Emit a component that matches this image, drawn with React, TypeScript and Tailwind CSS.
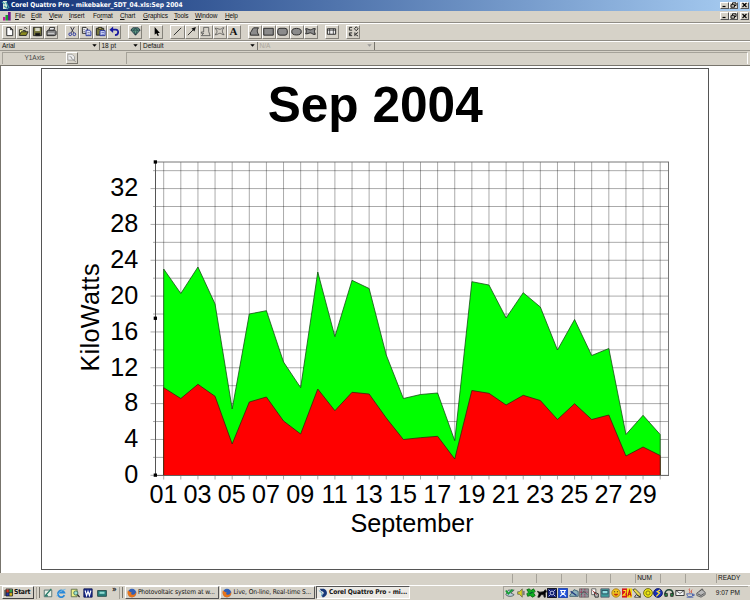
import type { ReactNode } from 'react';
import clsx from 'clsx';

// Height of each day's point on the chart canvas
const total = [
  269, 293.5, 267, 304, 409, 314, 310.7, 362, 387.7, 272, 336.7, 280.3, 288.5, 355, 398.5,
  394.5, 393, 440.7, 281.7, 285, 318, 292.7, 307, 350, 319.5, 355.5, 348.5, 434.5, 415.3, 434.5,
];
const base = [
  387.7, 398.5, 384.3, 396.3, 444, 402, 397, 421, 434, 389, 410.7, 392.3, 394, 418, 439.5,
  437.7, 436.3, 459, 390.5, 393.3, 405, 395.3, 400.5, 419.5, 403.7, 419.5, 415, 456, 447, 455.5,
];

const dayX = (i: number) => 163.7 + i * 17.12;
const kwY = (v: number) => 475.3 - v * 8.96;
const area = (ys: number[]) =>
  `163.7,475.5 ${ys.map((y, i) => `${dayX(i)},${y}`).join(' ')} ${dayX(29)},475.5`;

const menu = [
  { label: 'File', w: 'w-[16px]' },
  { label: 'Edit', w: 'w-[18px]' },
  { label: 'View', w: 'w-[20px]' },
  { label: 'Insert', w: 'w-[24px]' },
  { label: 'Format', w: 'w-[27px]', key: 2 },
  { label: 'Chart', w: 'w-[23px]' },
  { label: 'Graphics', w: 'w-[31px]' },
  { label: 'Tools', w: 'w-[21px]' },
  { label: 'Window', w: 'w-[30px]' },
  { label: 'Help', w: 'w-[20px]' },
];

function Ico({ children, size = 12 }: { children: ReactNode; size?: number }) {
  return (
    <svg width={size} height={size} viewBox="0 0 12 12" fill="none" stroke="#222" strokeWidth="1" className="shrink-0">
      {children}
    </svg>
  );
}

const toolGroups: ReactNode[][] = [
  [
    <path d="M3 1.5h4l2.5 2.5v6.5H3zM7 1.5V4h2.5" fill="#fff" />,
    <>
      <path d="M1.5 10V4h3l1 1H8v1.5" fill="#ffff9c" />
      <path d="M1.5 10.3l2-4h7.5l-2 4z" fill="#8c8c20" />
      <path d="M6.5 2.5c1-1.3 2.5-1 3.2.6" />
    </>,
    <>
      <path d="M1.5 1.5h9v9h-9z" fill="#77773c" />
      <path d="M3.5 2h5v3.5h-5z" fill="#d8d8c8" stroke="none" />
      <path d="M4 8h4.5v2.5H4z" fill="#111" />
    </>,
    <>
      <path d="M3 5l1.2-3.5H9.5L8.5 5z" fill="#eee" />
      <path d="M1 5.5L3 4.5h6.5L11 6v3.5l-2 1H1z" fill="#888" />
      <path d="M2 8h7" stroke="#ddd" />
    </>,
  ],
  [
    <>
      <path d="M4 1l3.2 6.5M8 1L4.5 7.5" stroke="#334" />
      <circle cx="3.5" cy="9" r="1.5" stroke="#22309c" />
      <circle cx="8" cy="9" r="1.5" stroke="#22309c" />
    </>,
    <>
      <path d="M1.5 1.5h4l1.5 1.5v5H1.5z" fill="#eee" />
      <path d="M5.5 4.5h3.5l1.8 1.5v4.5H5.5z" fill="#dfe4ff" stroke="#22309c" />
      <path d="M2.5 4h2M2.5 6h2M7 7h2.5M7 9h2.5" stroke="#556" strokeWidth=".7" />
    </>,
    <>
      <path d="M1.5 2.5h8v7.5h-8z" fill="#77773c" />
      <path d="M3.5 1.5h4v2h-4z" fill="#ddd060" />
      <path d="M5.5 5h5.5v5.5H5.5z" fill="#dfe4ff" stroke="#22309c" />
      <path d="M7 7h3M7 9h3" stroke="#22309c" strokeWidth=".7" />
    </>,
    <>
      <path d="M3 4h4.5c3.5 0 3.5 6-1 6" stroke="#1616a0" strokeWidth="1.9" />
      <path d="M.5 4l4-3.5v7z" fill="#1616a0" stroke="none" />
    </>,
  ],
  [
    <>
      <path d="M1 4.5L3 2h6l2 2.5L6 10z" fill="#5d9c86" stroke="#234" />
      <path d="M1 4.5h10M4 4.5L6 10l2-5.5L6 2z" strokeWidth=".6" stroke="#123" />
    </>,
  ],
  [<path d="M4 1v8.5l1.800-1.700L7.300 11l1.300-.6L7.300 7.500h2.400z" fill="#000" stroke="none" />],
  [
    <path d="M2 10l8-8" />,
    <>
      <path d="M2 10l7-7" />
      <path d="M10.800 1.200L6 2.800l3.200 3.200z" fill="#111" stroke="none" />
    </>,
    <path d="M4 1.500h5.500V6L11 10.500H1.500L4 8H1.500V6.500H4z" strokeWidth=".8" stroke="#444" />,
    <path d="M1 2.500c3-.5 4 1.500 6 1s2-2 4-1.500M11 2c-2.500 2-2.500 5 0 7.500M11 9.500c-2 .5-3-2-5-1.500s-3 2-5 1.500M1 9.500c3-2 3-5 0-7" strokeWidth=".8" stroke="#444" />,
    <text x="6" y="10.300" textAnchor="middle" fontSize="12" fontWeight="bold" fontFamily="Liberation Serif, serif" fill="#111" stroke="none">A</text>,
  ],
  [
    <path d="M5 2h5.500C8.500 4 8.500 7 11 10H1.500V7C3 6 3.500 3 5 2z" fill="#8b8b8b" />,
    <path d="M.8 2.500h10.400v7.500H.8z" fill="#8b8b8b" />,
    <rect x=".8" y="2.500" width="10.400" height="7.500" rx="2.500" fill="#8b8b8b" />,
    <ellipse cx="6" cy="6.200" rx="5.200" ry="3.600" fill="#8b8b8b" />,
    <path d="M.7 3c2-.8 3 1.200 5 1.200S9 2 11.300 3c-1.500 2-1 4 0 6-2 1-4-1.500-5.500-1.500S2.500 9 .7 8.500c1-2 1-3.500 0-5.500z" fill="#8b8b8b" />,
  ],
  [
    <>
      <path d="M1.500 3H10.500v6H1.500z" fill="#eee" />
      <path d="M1.500 4.500h9M4 3v6M8 3v6" strokeWidth=".8" />
    </>,
  ],
  [
    <>
      <path d="M4.500 4.500h-3v-3h3M4.500 10.500h-3v-3h3M1.500 9h2" />
      <path d="M9 .8l2 2.200-2 2.200L7 3zM7.500 7v4M11 7L8 9l3 2" />
    </>,
  ],
];

const drops = [
  { label: 'Arial', w: 'w-[99.5px]' },
  { label: '18 pt', w: 'w-[41.5px]' },
  { label: 'Default', w: 'w-[116.5px]' },
  { label: 'N/A', w: 'w-[117px]', off: true },
];

const firefox = (
  <>
    <circle cx="6" cy="6" r="5" fill="#2f5fb8" stroke="none" />
    <path d="M1 3c-1.500 5 2 8.500 5.500 8.200C10 11 12 7.500 11 4c-.5 3-2 4.500-4.500 4C4 7.700 5 6 6 5.500 3.500 5 3 4 1 3z" fill="#e8741a" stroke="none" />
  </>
);

const quick: ReactNode[] = [
  <>
    <path d="M1.500 2.500h9v8h-9z" fill="#e8f0e8" stroke="#466" />
    <path d="M3 9l7-8M2 9.500h4" stroke="#276" strokeWidth="1.400" />
  </>,
  <>
    <path d="M10 8.500a4 4 0 1 1 0-3H3" stroke="#2a88d8" strokeWidth="2.100" />
    <path d="M1 10C2 6 7 2 11.500 1.500" stroke="#6ab8e8" />
  </>,
  <>
    <path d="M1.500 1.500h7v9h-7z" fill="#eef088" stroke="#564" />
    <circle cx="7" cy="6" r="2.500" fill="#9fe0d0" stroke="#365" />
    <path d="M9 8l2.500 3" strokeWidth="1.500" />
  </>,
  <>
    <path d="M1 1h10v10H1z" fill="#1a2c8c" stroke="#0c1450" />
    <path d="M2.500 3l1.800 6L6 4l1.700 5 1.800-6" stroke="#fff" strokeWidth="1.400" />
  </>,
  <>
    <path d="M.7 3h10.600v7H.7z" fill="#28807c" stroke="#244" />
    <path d="M3 4.500h6V7H3z" fill="#8fd8d0" stroke="none" />
  </>,
];

const tray: ReactNode[] = [
  <>
    <path d="M1 8c3 3 8 2.500 10 0L7 6l4-3.500H4z" fill="#bcd" stroke="#455" />
    <path d="M1 3l3 4 5-5" stroke="#12a032" strokeWidth="2" />
  </>,
  <>
    <path d="M2 4.500h2L7.500 1v10L4 7.500H2z" fill="#d8d020" stroke="#665" />
    <path d="M9.500 3.500v5" />
  </>,
  <>
    <path d="M1 2l3-1 2 2 3-2 2 3-2 2 2 3-3 2-3-2-3 1-1-3 2-2z" fill="#10b020" stroke="#086010" />
    <path d="M4 7l4-2" stroke="#024" />
  </>,
  <path d="M.5 4l3 1 4-.5L10 2l1.500 2-1.500 2.500V11H8.500L8 8H5l-2 3H1l1.500-4z" fill="#000" />,
  <>
    <path d="M.5.5h11v11H.5z" fill="#101c70" stroke="#000" />
    <path d="M2 2l2 2M10 2L8 4M2 10l2-2M10 10L8 8" stroke="#d8e0f8" />
    <circle cx="6" cy="6" r="2.300" stroke="#d8e0f8" />
  </>,
  <>
    <path d="M.5.5h11v11H.5z" fill="#2050d8" stroke="#1438a0" />
    <path d="M2.500 10L6 6.500 9.500 10M2.500 3h7M4 3v3h4V3" stroke="#fff" strokeWidth="1.300" />
  </>,
  <>
    <path d="M1 9l5-7 5 2v6H1z" fill="#8fb4bc" stroke="#356" />
    <path d="M2 4l7 5" stroke="#223c80" strokeWidth="1.600" />
  </>,
  <>
    <path d="M.5 1h11v10H.5z" fill="#909098" stroke="#666" />
    <path d="M3 1v10M7 1v10M1 5h10" stroke="#a03050" strokeDasharray="2 1" />
    <path d="M2 8l4-4 4 4" stroke="#286858" />
  </>,
  <>
    <path d="M2 1h5v7H2z" fill="#fff" stroke="#555" />
    <path d="M5 5l5 2v4H6z" fill="#bbb" />
    <path d="M3 3l5 5" stroke="#b02828" />
  </>,
  <>
    <path d="M1 1h10v10H1z" fill="#3c9c9c" stroke="#556" />
    <path d="M2.500 3h7v4h-7z" fill="#8fdce0" stroke="#245" />
  </>,
  <>
    <circle cx="6" cy="6" r="5" fill="#f4c820" stroke="#a07010" />
    <path d="M3 7c1.500 3 4.500 3 6 0z" fill="#c03010" stroke="none" />
    <path d="M3.500 4.500h1.500M7 4.500h1.500" />
  </>,
  <>
    <path d="M0 .5h6v11H0z" fill="#d81818" stroke="none" />
    <path d="M6 .5h6v11H6z" fill="#f4d818" stroke="none" />
    <path d="M1.500 3H4.500v2.500l-3 3h3" stroke="#ffe020" strokeWidth="1.300" />
    <path d="M7 10l2-7 2 7M8 7.500h2" stroke="#c01010" strokeWidth="1.300" />
  </>,
  <>
    <path d="M1 2l3-1 6 6v4L7 9z" fill="#e8d850" stroke="#443" />
    <path d="M5 8l5 3H3z" fill="#fff" />
  </>,
  <>
    <circle cx="6" cy="6" r="5.300" fill="#ece414" stroke="#5c5a10" />
    <circle cx="6" cy="6" r="2.500" stroke="#6c6a10" />
  </>,
  <>
    <circle cx="6" cy="6" r="5.300" fill="#1830b8" stroke="#0a1460" />
    <path d="M8.500 2.500L5 4.500l3 1.500-4 4" stroke="#f8e040" strokeWidth="1.400" />
  </>,
  <>
    <path d="M1 8c0-8 10-8 10 0" stroke="#243" strokeWidth="1.800" />
    <path d="M1 6.500h3V10H1zM8 6.500h3V10H8z" fill="#2c9048" />
  </>,
  <>
    <path d="M1 3h10v6H1z" fill="#f4f4f4" />
    <path d="M1 3l5 3.500L11 3" strokeWidth=".8" />
  </>,
  <>
    <path d="M2 7h7v2.500c-1 1.500-5 1.500-6 0zM9 7.500h2v1.500H9M2 11h8" stroke="#4058a8" />
    <path d="M6 .5c-3 2 2 3-1 5.500M8.500 2c-1.500 1.500 0 2-1 4" stroke="#d04030" />
  </>,
  <>
    <path d="M1 6l6-4 4 3v3l-5 3-5-2z" fill="#b8b8b8" stroke="#555" />
    <path d="M4 4l3-3 2 1.500M2 7l4 2 4-2.500" stroke="#444" />
  </>,
];

function WindowButtons() {
  const cls =
    'flex h-[7.5px] w-[9px] items-center justify-center border-t border-l border-r border-b border-t-white border-l-white border-r-[#555] border-b-[#555] bg-[#d6d2c8]';
  return (
    <div className="ml-auto flex items-center pr-[1px]">
      <span className={cls}>
        <svg width="7" height="6" viewBox="0 0 7 6"><path d="M1.500 4.500h3" stroke="#000" strokeWidth="1.200" /></svg>
      </span>
      <span className={cls}>
        <svg width="7" height="6" viewBox="0 0 7 6" fill="none" stroke="#000" strokeWidth=".9"><path d="M2.500 2.200V.8H6V3.500H5M1 2.700h3.500v2.500H1z" /></svg>
      </span>
      <span className={clsx(cls, 'ml-[2px]')}>
        <svg width="7" height="6" viewBox="0 0 7 6"><path d="M1.500 1l4 4M5.500 1l-4 4" stroke="#000" strokeWidth="1.100" /></svg>
      </span>
    </div>
  );
}

function Chart() {
  return (
    <svg width="668" height="502" viewBox="41 68 668 502" className="block" fontFamily="Liberation Sans, Arial, sans-serif">
      <rect x="41.500" y="68.500" width="667" height="501" fill="#fff" stroke="#555" />
      <text x="375.200" y="121.800" textAnchor="middle" fontSize="49.600" fontWeight="bold">Sep 2004</text>

      {/* Grid */}
      <g stroke="#000" strokeOpacity=".42" strokeWidth=".8">
        {Array.from({ length: 18 }, (_, i) => (
          <path key={i} d={`M${i % 2 ? 153 : 150.5} ${kwY(i * 2)}H668.5`} />
        ))}
        {total.map((_, i) => (
          <path key={i} d={`M${dayX(i)} 162V479.500`} />
        ))}
      </g>
      <polygon points={area(total)} fill="#0f0" stroke="#145014" strokeWidth=".8" />
      <polygon points={area(base)} fill="#f00" stroke="#402010" strokeWidth=".8" />
      <path d="M155 162H669M668.500 162V476M155 475.500H669" stroke="#666" strokeWidth=".9" fill="none" />
      <path d="M155.500 162V476" stroke="#555" />

      {/* Selection handles on the Y axis */}
      <g fill="#000">
        <rect x="153.700" y="160.300" width="3.300" height="3.300" />
        <rect x="153.700" y="316.600" width="3.300" height="3.300" />
        <rect x="153.700" y="473.500" width="3.300" height="3.300" />
      </g>

      <g fontSize="25.200">
        {[0, 4, 8, 12, 16, 20, 24, 28, 32].map((v) => (
          <text key={v} x="138.200" y={kwY(v) + 7.8} textAnchor="end">{v}</text>
        ))}
        {Array.from({ length: 15 }, (_, i) => (
          <text key={i} x={dayX(i * 2) - 0.3} y="502.500" textAnchor="middle">
            {String(i * 2 + 1).padStart(2, '0')}
          </text>
        ))}
        <text x="412" y="531.700" textAnchor="middle">September</text>
        <text transform="translate(99.300 317.500) rotate(-90)" textAnchor="middle" textLength="108">KiloWatts</text>
      </g>
    </svg>
  );
}

function Task({ label, icon, active }: { label: string; icon: ReactNode; active?: boolean }) {
  return (
    <div
      className={clsx(
        'flex h-[13px] w-[94.5px] items-center gap-[1px] border pl-[1px] whitespace-nowrap',
        active
          ? 'border-t-[#555] border-l-[#555] border-r-white border-b-white bg-[#ebe9e4] font-bold text-[6.6px] tracking-[-0.08px]'
          : 'border-t-white border-l-white border-r-[#555] border-b-[#555] text-[6.6px] tracking-[-0.1px]',
      )}
    >
      <Ico size={10}>{icon}</Ico>
      {label}
    </div>
  );
}

export default function App() {
  return (
    <div className="flex h-[600px] w-[750px] flex-col overflow-hidden bg-[#d6d2c8] font-['Liberation_Sans',Arial,sans-serif] text-[6.5px] leading-none text-[#111]">
      {/* Title bar */}
      <div className="flex h-[10.5px] shrink-0 items-center bg-linear-to-r from-[#123075] to-[#a8cdf2] pl-[1px] text-white">
        <svg width="9" height="10" viewBox="0 0 9 10" fill="none">
          <path d="M2 1h4v8H2z" fill="#d8e8d8" />
          <path d="M1 2l3 2M5 2l3 6M3 6l4 3" stroke="#48a0a8" strokeWidth="1.300" />
        </svg>
        <span className="ml-[1px] font-['DejaVu_Sans_Condensed','DejaVu_Sans',sans-serif] text-[6.6px] font-bold tracking-[-0.03px] whitespace-nowrap">
          Corel Quattro Pro - mikebaker_SDT_04.xls:Sep 2004
        </span>
        <WindowButtons />
      </div>

      {/* Menu */}
      <div className="flex h-[12px] shrink-0 items-center border-b border-[#8f8c85] pl-[2px]">
        <svg width="10" height="10" viewBox="0 0 10 10" className="mr-[3px]">
          <path d="M1 6h2.500v3.500H1z" fill="#c018a0" />
          <path d="M3.500 4h2.500v5.500H3.500z" fill="#18a030" />
          <path d="M6 1h2.700v8.500H6z" fill="#701888" />
        </svg>
        {menu.map(({ label, w, key = 0 }) => (
          <span key={label} className={clsx('shrink-0 tracking-[-0.15px]', w)}>
            {label.slice(0, key)}
            <u>{label[key]}</u>
            {label.slice(key + 1)}
          </span>
        ))}
        <WindowButtons />
      </div>

      {/* Toolbar */}
      <div className="flex h-[18.5px] shrink-0 items-center gap-[7px] border-t border-b border-t-white border-b-[#8f8c85] pl-[2px]">
        {toolGroups.map((group, g) => (
          <div key={g} className="flex">
            {group.map((icon, i) => (
              <button
                key={i}
                className="flex h-[13.5px] w-[14.05px] items-center justify-center border border-t-white border-l-white border-r-[#85827a] border-b-[#85827a]"
              >
                <Ico size={11}>{icon}</Ico>
              </button>
            ))}
          </div>
        ))}
      </div>

      {/* Property bar */}
      <div className="flex h-[9.5px] shrink-0 items-center border-t border-b border-t-white border-b-[#9a978f]">
        {drops.map(({ label, w, off }) => (
          <div
            key={label}
            className={clsx('flex h-full items-center justify-between border-r border-[#77746c] pr-[2px] pl-[2px]', w, off && 'text-[#aaa69c]')}
          >
            {label}
            <svg width="5" height="3" viewBox="0 0 5 3"><path d="M.3.300h4.400L2.500 2.700z" fill={off ? '#999' : '#000'} /></svg>
          </div>
        ))}
      </div>

      {/* Input line */}
      <div className="flex h-[14.5px] shrink-0 items-center pr-[2px] pl-[2px] text-[#444]">
        <div className="flex h-[12px] w-[64px] items-center justify-center border-t border-l border-[#a5a299]">Y1Axis</div>
        <div className="flex h-[12px] w-[12px] items-center justify-center border border-t-white border-l-white border-r-[#77746c] border-b-[#77746c]">
          <Ico size={10}>
            <path d="M1 1.500h5l3 3v4H1z" fill="#eee" stroke="#999" />
            <path d="M3 4l3 1.500M5 6l5.500 4.500" stroke="#888" />
          </Ico>
        </div>
        <div className="ml-[48px] h-[12px] flex-1 border-t border-l border-r border-t-[#a5a299] border-l-[#a5a299] border-r-white" />
      </div>

      {/* Workspace */}
      <div className="flex h-[507.5px] shrink-0 justify-start border-t border-l border-t-[#77746c] border-l-[#77746c] bg-white pt-[2px] pl-[40px]">
        <Chart />
      </div>

      {/* Status bar */}
      <div className="flex h-[12px] shrink-0 items-center justify-end">
        {['', '', '', '', '', 'NUM', '', '', 'READY'].map((s, i) => (
          <span
            key={i}
            className={clsx(
              'flex h-[9px] items-center border-l border-[#a5a299] pl-[1px]',
              s === 'READY' ? 'w-[34px]' : i === 7 ? 'w-[31.5px]' : 'w-[24.7px]',
            )}
          >
            {s}
          </span>
        ))}
      </div>

      {/* Taskbar */}
      <div className="flex h-[15.5px] shrink-0 items-center border-t border-white font-['DejaVu_Sans_Condensed','DejaVu_Sans',sans-serif]">
        <div className="ml-[2px] flex h-[13px] w-[32px] items-center border border-t-white border-l-white border-r-[#444] border-b-[#444] pl-[1px] text-[6.8px] font-bold tracking-[-0.25px]">
          <svg width="9" height="9" viewBox="0 0 9 9" className="mr-[1px] shrink-0">
            <path d="M0 3h2M0 5h2M0 7h2" stroke="#222" />
            <path d="M2 1.500h3v3H2z" fill="#d03020" />
            <path d="M5.500 1.500h3v3h-3z" fill="#30a040" />
            <path d="M2 5h3v3H2z" fill="#2838b0" />
            <path d="M5.500 5h3v3h-3z" fill="#d8b820" />
            <path d="M2 1h6.500v7H2zM5.200 1v7M2 4.700h6.500" fill="none" stroke="#111" strokeWidth=".7" />
          </svg>
          Start
        </div>
        <div className="ml-[2px] h-[12px] w-[1px] bg-[#a5a299]" />
        <div className="ml-[1.5px] h-[11px] w-[1px] bg-[#77746c]" />
        <div className="ml-[3px] flex gap-[3.6px]">
          {quick.map((icon, i) => (
            <Ico key={i} size={10}>{icon}</Ico>
          ))}
        </div>
        <span className="ml-[5px] w-[7px] pb-[5px] text-[8px] font-bold">»</span>
        <div className="h-[12px] w-[1px] bg-[#a5a299]" />
        <div className="ml-[2px] h-[11px] w-[1px] bg-[#77746c]" />
        <div className="ml-[2px] flex gap-[1px]">
          <Task label="Photovoltaic system at w..." icon={firefox} />
          <Task label="Live, On-line, Real-time S..." icon={firefox} />
          <Task
            label="Corel Quattro Pro - mi..."
            active
            icon={
              <>
                <path d="M2 1h5c5 2 5 8 0 10H5V8c3-1 2-4-1-4z" fill="#183878" stroke="none" />
                <path d="M1 3l4 3-1 4" stroke="#50a0c0" />
              </>
            }
          />
        </div>
        <div className="mr-[2px] ml-auto flex h-[13px] w-[245px] items-center border-t border-l border-[#a5a299]">
          <div className="flex gap-[0.6px] pl-[1px]">
            {tray.map((icon, i) => (
              <Ico key={i} size={10}>{icon}</Ico>
            ))}
          </div>
          <span className="ml-auto pr-[8px] font-['Liberation_Sans',Arial,sans-serif] whitespace-nowrap">9:07 PM</span>
        </div>
      </div>
    </div>
  );
}
